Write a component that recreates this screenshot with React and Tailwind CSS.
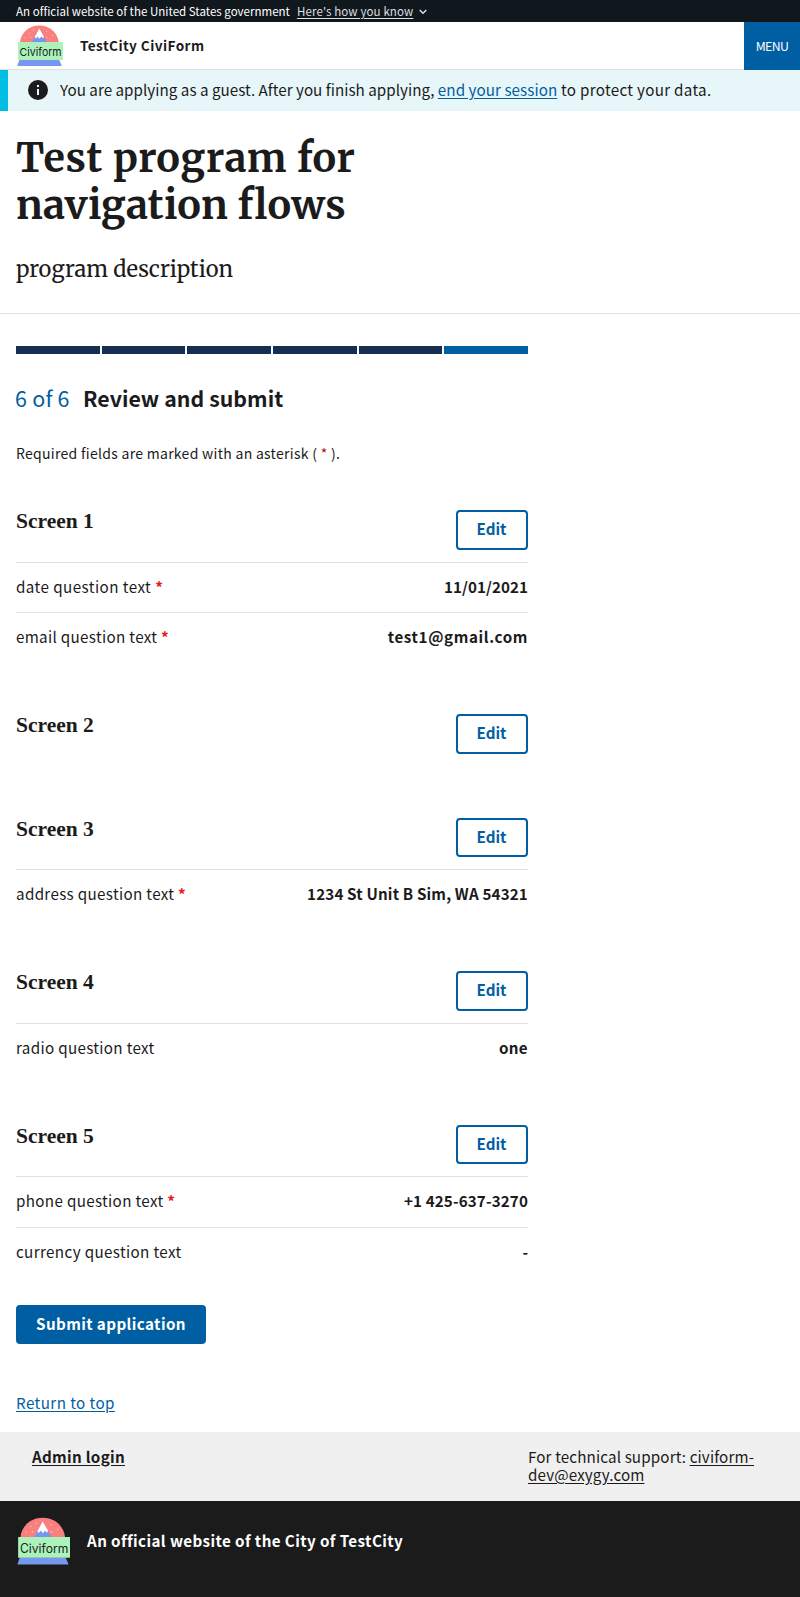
const sections = [
  {
    title: "Screen 1",
    rows: [
      { label: "date question text", required: true, value: "11/01/2021", lt: "tracking-[0.44px]", vt: "tracking-[0.05px]" },
      { label: "email question text", required: true, value: "test1@gmail.com", lt: "tracking-[0.32px]", vt: "tracking-[0.6px]" },
    ],
  },
  { title: "Screen 2", rows: [] },
  {
    title: "Screen 3",
    rows: [{ label: "address question text", required: true, value: "1234 St Unit B Sim, WA 54321", lt: "tracking-[0.33px]", vt: "tracking-[0.16px]" }],
  },
  {
    title: "Screen 4",
    rows: [{ label: "radio question text", required: false, value: "one", lt: "tracking-[0.32px]", vt: "tracking-[0.3px]" }],
  },
  {
    title: "Screen 5",
    rows: [
      { label: "phone question text", required: true, value: "+1 425-637-3270", lt: "tracking-[0.33px]", vt: "tracking-[0.12px]" },
      { label: "currency question text", required: false, value: "-", lt: "tracking-[0.36px]", vt: "tracking-normal" },
    ],
  },
];

function Logo({ className }) {
  return (
    <svg viewBox="0 0 46 41" className={className} aria-hidden="true">
      <path d="M3 18V17C4 7.4 12 .4 22.3 .4S40.6 7.4 41.7 17v1z" fill="#fa8080" />
      <g fill="#fcd0d0">
        <circle cx="12" cy="8" r=".6" /><circle cx="16.5" cy="5.2" r=".6" /><circle cx="8" cy="13" r=".6" />
        <circle cx="13.5" cy="12.5" r=".6" /><circle cx="29.5" cy="6.5" r=".6" /><circle cx="35.5" cy="10.5" r=".6" /><circle cx="30" cy="12.5" r=".6" />
      </g>
      <path d="M14.3 18L22.3 4l8 14z" fill="#7598ee" />
      <path d="M22.3 3.6l-4.6 8.4 1.2 1.6 1.7-2.2 1.8 2.4 2-2.4 1.4 1.9 1.2-1.6z" fill="#fff" />
      <path d="M2.4 34.8h39.8l2.6 6.2H.3z" fill="#7598ee" />
      <path d="M1 17h45v18H1z" fill="#adf2bb" />
      <text x="2.6" y="30.7" fontFamily="Inter, sans-serif" fontSize="11" textLength="42" lengthAdjust="spacingAndGlyphs" fill="#15251a">Civiform</text>
    </svg>
  );
}

function EditButton() {
  return (
    <button className="h-[39.27px] w-[72px] rounded border-2 border-[#005ea2] bg-white pr-px pb-[3.6px] text-[15.2px] leading-4 font-bold text-[#005ea2]">
      Edit
    </button>
  );
}

function Section({ section }) {
  return (
    <section>
      <div className="flex justify-between pb-3">
        <h3 className='pt-px font-["Liberation_Serif",serif] text-[21.5px] leading-[21.4px] font-bold'>{section.title}</h3>
        <EditButton />
      </div>
      {section.rows.map((row) => (
        <div key={row.label} className="flex justify-between border-t border-[#dfe1e2] pt-[11px] pb-[13px] leading-[25.44px]">
          <div className={row.lt}>
            {row.label}
            {row.required && <span className="font-bold text-[#e21d1d]"> *</span>}
          </div>
          <div className={`font-bold ${row.vt}`}>{row.value}</div>
        </div>
      ))}
    </section>
  );
}

export default function App() {
  return (
    <div className='flex min-h-[1597px] w-full flex-col bg-white font-["Noto_Sans_CJK_SC",sans-serif] text-[15.2px] text-[#1b1b1b]'>
      <div className="flex h-[22px] items-center bg-[#11181d] pl-4 text-[11.5px] leading-4 text-white">
        <span className="tracking-[0.02px]">An official website of the United States government</span>
        <a className="ml-[7px] tracking-[0.13px] text-[#dcdee0] underline underline-offset-2">Here's how you know</a>
        <svg viewBox="0 0 8 6" className="mt-0.5 ml-1.5 h-1.5 w-2" fill="none" stroke="#dcdee0" strokeWidth="1.5">
          <path d="M.7 1L4 4.3 7.3 1" />
        </svg>
      </div>

      <header className="flex h-12 border-b border-[#dfe1e2]">
        <Logo className="mt-[3px] ml-[17px] h-[41px] w-[46px]" />
        <div className="ml-[17px] flex-1 pt-3 text-[13.6px] leading-[22px] font-bold tracking-[0.42px]">TestCity CiviForm</div>
        <button className="-mb-px w-14 bg-[#005ea2] text-[12.3px] leading-5 tracking-[-0.6px] text-white">MENU</button>
      </header>

      <div className="flex h-[41px] items-start border-l-8 border-[#00bde3] bg-[#e7f6f8] pl-[18px]">
        <svg viewBox="0 0 24 24" className="mt-2 h-6 w-6" fill="#1b1b1b">
          <path d="M12 2a10 10 0 1 0 0 20 10 10 0 0 0 0-20zm1 15h-2v-6h2v6zm0-8h-2V7h2v2z" />
        </svg>
        <p className="mt-[7px] ml-2.5 leading-6 whitespace-pre">
          <span className="tracking-[0.03px]">You are applying as a guest. After you finish applying, </span>
          <a className="tracking-[0.06px] text-[#005ea2] underline underline-offset-2">end your session</a>
          <span className="tracking-[0.3px]"> to protect your data.</span>
        </p>
      </div>

      <div className='h-[203px] border-b border-[#dfe1e2] pt-[23.8px] pl-4 font-["Merriweather","Noto_Serif","DejaVu_Serif_Condensed",serif]'>
        <h1 className="w-[400px] text-[39.5px] leading-[46.85px] font-bold tracking-[0.5px]">
          Test program for
          <br />
          <span className="tracking-[0.15px]">navigation flows</span>
        </h1>
        <p className="mt-[24px] text-[21.9px] leading-[35px]">program description</p>
      </div>

      <main className="ml-4 w-[512px]">
        <div className="mt-8 grid h-2 grid-cols-6 gap-[2px]">
          <div className="bg-[#162e51]" />
          <div className="bg-[#162e51]" />
          <div className="bg-[#162e51]" />
          <div className="bg-[#162e51]" />
          <div className="bg-[#162e51]" />
          <div className="bg-[#005ea2]" />
        </div>
        <h2 className="mt-[27.5px] flex leading-8">
          <span className="-ml-px w-[68px] text-[21.5px] tracking-[0.2px] text-[#005ea2]">6 of 6</span>
          <span className="text-[21.3px] font-bold tracking-[0.05px]">Review and submit</span>
        </h2>
        <p className="mt-[28.5px] text-[14px] leading-[22px] tracking-[0.29px]">
          Required fields are marked with an asterisk ( <span className="text-[#b50909]">*</span> ).
        </p>
        <div className="mt-[46.3px] flex flex-col gap-[52px]">
          {sections.map((s) => (
            <Section key={s.title} section={s} />
          ))}
        </div>
        <button className="mt-[27.9px] block h-[39.27px] w-[190px] rounded bg-[#005ea2] pb-[3px] leading-4 font-bold tracking-[0.4px] text-white">
          Submit application
        </button>
        <a className="mt-[45.5px] block leading-6 tracking-[0.42px] text-[#005ea2] underline underline-offset-2">Return to top</a>
      </main>

      <div className="mt-[17.7px] flex h-[69px] bg-[#f0f0f0] pt-[15px] leading-[18px]">
        <div className="w-[528px] pl-8">
          <a className="font-bold tracking-[0.3px] underline underline-offset-2">Admin login</a>
        </div>
        <div className="tracking-[0.13px]">
          For technical support: <a className="underline underline-offset-2">civiform-<br />dev@exygy.com</a>
        </div>
      </div>

      <footer className="flex h-24 bg-[#1b1b1b] text-white">
        <Logo className="mt-4 ml-[17px] h-12 w-[53px]" />
        <div className="ml-[17px] pt-7 leading-[22px] font-bold tracking-[0.4px]">An official website of the City of TestCity</div>
      </footer>
    </div>
  );
}
